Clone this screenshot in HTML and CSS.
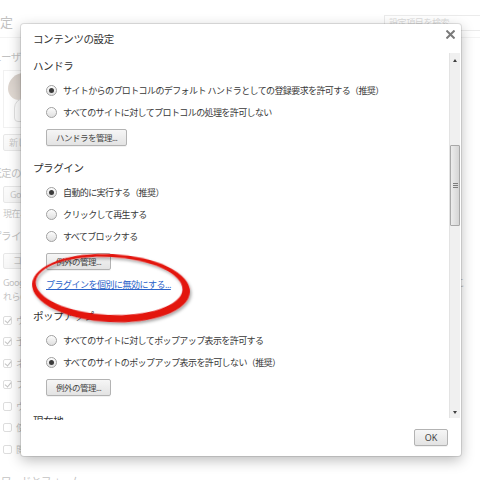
FILE: index.html
```html
<!DOCTYPE html>
<html lang="ja">
<head>
<meta charset="utf-8">
<title>コンテンツの設定</title>
<link rel="stylesheet" href="styles.css">
</head>
<body>
<div class="page">
  <header class="page-head">
    <h1 class="page-title">設定</h1>
    <div class="search">設定項目を検索</div>
  </header>
  <main class="page-main">
    <h2 class="sec-title">ユーザー</h2>
    <div class="sec-body">
      <div class="profiles">
        <div class="profile-pic"><span class="pic-head"></span><span class="pic-body"></span></div>
      </div>
      <div class="bg-btn btn-new">新しいユーザーを追加</div>
    </div>
    <h2 class="sec-title sec-gap">既定のブラウザ</h2>
    <div class="sec-body">
      <div class="bg-btn btn-goo">Google Chrome を既定のブラウザにする</div>
      <p class="bg-text note">現在、Google Chrome は既定のブラウザに設定されていません。</p>
    </div>
    <h2 class="sec-title sec-gap2">プライバシー</h2>
    <div class="sec-body">
      <div class="bg-btn btn-content">コンテンツの設定...</div>
      <p class="bg-text para">Google Chrome では、ブラウジング エクスペリエンスを向上させるためにウェブサービスを使用する場合があります。こ<br>れらのサービスは必要に応じて無効にできます。</p>
      <div class="checks">
        <div class="check"><span class="cb on"></span>ウェブサービスを使用してナビゲーション エラーの解決を補助する</div>
        <div class="check"><span class="cb on"></span>予測サービスを使用してアドレスバーに入力された検索と URL を補完する</div>
        <div class="check"><span class="cb on"></span>ネットワーク動作を予測してページの読み込み速度を向上させる</div>
        <div class="check"><span class="cb on"></span>フィッシングや不正なソフトウェアからの保護を有効にする</div>
        <div class="check"><span class="cb"></span>ウェブサービスを使用してスペルミスを解決する</div>
        <div class="check"><span class="cb"></span>使用統計データと障害レポートを自動的に Google に送信する</div>
        <div class="check"><span class="cb"></span>閲覧トラフィックと一緒に「トラッキング拒否」リクエストを送信する</div>
      </div>
    </div>
    <h2 class="sec-title sec-gap3">パスワードとフォーム</h2>
  </main>
</div>

<div class="veil"></div>

<div class="dialog" role="dialog">
  <div class="dlg-head">
    <h1 class="dlg-title">コンテンツの設定</h1>
    <span class="dlg-close"><svg viewBox="0 0 9 9" width="9" height="9"><path d="M1.2 1.2 L7.8 7.8 M7.8 1.2 L1.2 7.8" stroke="#7a7a7a" stroke-width="2" stroke-linecap="square"/></svg></span>
  </div>
  <div class="dlg-body">
    <div class="dlg-content">
      <section class="grp">
        <h3 class="grp-title">ハンドラ</h3>
        <div class="radios">
          <div class="radio"><span class="rb on"></span><span>サイトからのプロトコルのデフォルト ハンドラとしての登録要求を許可する（推奨）</span></div>
          <div class="radio"><span class="rb"></span><span>すべてのサイトに対してプロトコルの処理を許可しない</span></div>
        </div>
        <button class="btn">ハンドラを管理...</button>
      </section>
      <section class="grp">
        <h3 class="grp-title">プラグイン</h3>
        <div class="radios">
          <div class="radio"><span class="rb on"></span><span>自動的に実行する（推奨）</span></div>
          <div class="radio"><span class="rb"></span><span>クリックして再生する</span></div>
          <div class="radio"><span class="rb"></span><span>すべてブロックする</span></div>
        </div>
        <button class="btn">例外の管理...</button>
        <a class="link" href="#">プラグインを個別に無効にする...</a>
      </section>
      <section class="grp">
        <h3 class="grp-title">ポップアップ</h3>
        <div class="radios">
          <div class="radio"><span class="rb"></span><span>すべてのサイトに対してポップアップ表示を許可する</span></div>
          <div class="radio"><span class="rb on"></span><span>すべてのサイトのポップアップ表示を許可しない（推奨）</span></div>
        </div>
        <button class="btn">例外の管理...</button>
      </section>
      <section class="grp grp-last">
        <h3 class="grp-title">現在地</h3>
        <div class="radios">
          <div class="radio"><span class="rb"></span><span>すべてのサイトに対して現在地の追跡を許可する</span></div>
        </div>
      </section>
    </div>
    <div class="vscroll">
      <span class="arrow up"></span>
      <span class="track"><span class="thumb"><span class="grip"></span></span></span>
      <span class="arrow down"></span>
    </div>
  </div>
  <div class="dlg-foot"><button class="btn ok">OK</button></div>
</div>

<svg class="annot" width="480" height="480" viewBox="0 0 480 480" aria-hidden="true">
  <defs>
    <filter id="sh" x="-10%" y="-20%" width="120%" height="140%">
      <feDropShadow dx="1.5" dy="2" stdDeviation="1.5" flood-color="#000" flood-opacity="0.35"/>
    </filter>
  </defs>
  <g transform="rotate(3 111 288)" filter="url(#sh)">
    <path fill="#e3120f" fill-rule="evenodd" d="M32 288 A79 34 0 1 0 190 288 A79 34 0 1 0 32 288 Z M35.5 286 A73.5 29 0 1 0 182.5 286 A73.5 29 0 1 0 35.5 286 Z"/>
  </g>
</svg>
</body>
</html>
```

FILE: styles.css
```css
* { box-sizing: border-box; }

html, body {
  margin: 0;
  padding: 0;
}

body {
  position: relative;
  width: 480px;
  height: 480px;
  overflow: hidden;
  background: #ffffff;
  color: #303030;
  font-family: "Noto Sans", "Noto Sans CJK JP", sans-serif;
}

/* ---------- background settings page ---------- */
.page {
  margin-left: -13px;
  width: 520px;
}

.page-head {
  display: flex;
  align-items: flex-start;
  height: 38px;
  border-bottom: 1px solid #d6d6d6;
}

.page-title {
  margin: 14px 0 0;
  font-size: 13px;
  line-height: 16px;
  font-weight: normal;
}

.search {
  margin: 15px 3px 0 auto;
  width: 120px;
  height: 16px;
  padding-left: 4px;
  border: 1px solid #bdbdbd;
  font-size: 9px;
  line-height: 14px;
  letter-spacing: -0.4px;
  color: #8a8a8a;
  white-space: nowrap;
}

.page-main {
  padding-left: 4px;
}

.sec-title {
  margin: 12px 0 0;
  font-size: 10.5px;
  line-height: 14px;
  letter-spacing: -0.5px;
  font-weight: normal;
  white-space: nowrap;
}

.sec-gap { margin-top: 15px; }
.sec-gap2 { margin-top: 8px; }
.sec-gap3 { margin-top: 14px; text-indent: -10px; }

.sec-body {
  padding-left: 12px;
}

.profiles {
  margin-top: 6px;
  width: 330px;
  height: 58px;
  padding: 2px 0 0 4px;
  border: 1px solid #d0d0d0;
}

.profile-pic {
  display: flex;
  flex-direction: column;
  align-items: center;
  width: 34px;
  height: 52px;
}

.pic-head {
  display: block;
  width: 34px;
  height: 27px;
  border-radius: 17px 17px 12px 12px;
  background: linear-gradient(#7c6450, #a08670);
}

.pic-body {
  display: block;
  width: 22px;
  height: 24px;
  margin-top: -2px;
  border: 1px solid #9a9a9a;
  border-radius: 10px 10px 4px 4px;
  background: #fff;
}

.bg-btn {
  height: 17px;
  border: 1px solid #b0b0b0;
  border-radius: 2px;
  background: linear-gradient(#f3f3f3, #e0e0e0);
  font-size: 9px;
  line-height: 15px;
  letter-spacing: -0.5px;
  color: #444;
  white-space: nowrap;
}

.btn-new {
  margin-top: 6px;
  width: 130px;
  padding-left: 5px;
}

.btn-goo {
  margin-top: 6px;
  width: 190px;
  padding-left: 6px;
}

.btn-content {
  margin-top: 10px;
  width: 110px;
  height: 16px;
  padding-left: 9px;
  line-height: 14px;
}

.bg-text {
  margin: 0;
  font-size: 9px;
  line-height: 14px;
  letter-spacing: -0.5px;
  white-space: nowrap;
}

.note { margin-top: 4px; }
.para { margin-top: 7px; }

.checks {
  margin-top: 5.5px;
}

.check {
  display: flex;
  align-items: center;
  height: 21.5px;
  font-size: 9px;
  letter-spacing: -0.5px;
  white-space: nowrap;
}

.cb {
  position: relative;
  flex: none;
  width: 9px;
  height: 9px;
  margin-right: 4px;
  border: 1px solid #8c8c8c;
  border-radius: 2px;
  background: #fff;
}

.cb.on::after {
  content: "";
  position: absolute;
  left: 2px;
  top: 0;
  width: 3px;
  height: 5px;
  border-right: 1.5px solid #333;
  border-bottom: 1.5px solid #333;
  transform: rotate(40deg);
}

.veil {
  position: absolute;
  inset: 0;
  background: rgba(255, 255, 255, 0.7);
}

/* ---------- dialog ---------- */
.dialog {
  position: absolute;
  left: 21px;
  top: 24px;
  width: 440px;
  height: 432px;
  display: flex;
  flex-direction: column;
  background: #ffffff;
  border-radius: 3px;
  box-shadow: 0 0 0 1px rgba(0, 0, 0, 0.1), 0 4px 14px rgba(0, 0, 0, 0.28);
}

.dlg-head {
  flex: none;
  display: flex;
  align-items: center;
  height: 29px;
  padding-left: 12px;
}

.dlg-title {
  margin: 0;
  font-size: 10.5px;
  line-height: 16px;
  letter-spacing: -0.4px;
  font-weight: normal;
  color: #333;
}

.dlg-close {
  display: block;
  align-self: flex-start;
  width: 9px;
  height: 9px;
  margin: 6px 6px 0 auto;
}

.dlg-close svg { display: block; }

.dlg-body {
  flex: none;
  display: flex;
  height: 367px;
}

.dlg-content {
  flex: 1;
  overflow: hidden;
  padding: 3px 0 0 12px;
}

.grp + .grp { margin-top: 12px; }
.grp + .grp-last { margin-top: 15px; }

.grp-title {
  margin: 0;
  font-size: 10.5px;
  line-height: 20px;
  letter-spacing: -0.4px;
  font-weight: normal;
  color: #303030;
}

.radios { margin-top: 3px; }

.radio {
  display: flex;
  align-items: center;
  height: 22px;
  padding-left: 13px;
  font-size: 9px;
  letter-spacing: -0.6px;
  color: #383838;
  white-space: nowrap;
}

.rb {
  flex: none;
  display: flex;
  align-items: center;
  justify-content: center;
  width: 11px;
  height: 11px;
  margin-right: 6px;
  border: 1px solid #a0a0a0;
  border-radius: 50%;
  background: linear-gradient(#fbfbfb, #e0e0e0);
  box-shadow: inset 0 1px 1px rgba(255, 255, 255, 0.8);
}

.rb.on::after {
  content: "";
  width: 5px;
  height: 5px;
  border-radius: 50%;
  background: #3b3b3b;
}

.btn {
  display: block;
  height: 17px;
  margin: 6px 0 0 13px;
  padding: 0 9px;
  border: 1px solid #b3b3b3;
  border-radius: 2px;
  background: linear-gradient(#f6f6f6, #e3e3e3);
  box-shadow: 0 1px 0 rgba(0, 0, 0, 0.05);
  font-family: "Noto Sans", "Noto Sans CJK JP", sans-serif;
  font-size: 8.5px;
  line-height: 15px;
  letter-spacing: -0.5px;
  color: #444;
  white-space: nowrap;
}

.link {
  display: block;
  width: fit-content;
  margin: 6px 0 0 13px;
  font-size: 9px;
  line-height: 18px;
  letter-spacing: -0.5px;
  color: #2a62c9;
  text-decoration: underline;
}

.vscroll {
  flex: none;
  display: flex;
  flex-direction: column;
  width: 11px;
  margin: 0 1px 2px 0;
  background: #f0f0f0;
  border-left: 1px solid #e3e3e3;
}

.arrow {
  flex: none;
  display: flex;
  align-items: center;
  justify-content: center;
  height: 14px;
}

.arrow.down { height: 12px; }

.arrow::before {
  content: "";
  width: 0;
  height: 0;
  border-left: 2.5px solid transparent;
  border-right: 2.5px solid transparent;
}

.arrow.up::before { border-bottom: 3px solid #404040; }
.arrow.down::before { border-top: 3px solid #404040; }

.track {
  flex: 1;
  display: block;
}

.thumb {
  display: flex;
  align-items: center;
  justify-content: center;
  height: 81px;
  margin-top: 78px;
  border: 1px solid #a8a8a8;
  border-radius: 1px;
  background: linear-gradient(to right, #ececec, #d5d5d5);
}

.grip {
  display: block;
  width: 5px;
  height: 6px;
  background: repeating-linear-gradient(#7d7d7d 0 1px, transparent 1px 2px);
}

.dlg-foot {
  flex: 1;
  display: flex;
  justify-content: flex-end;
  align-items: flex-start;
  padding: 9px 13px 0 0;
}

.btn.ok {
  width: 34px;
  margin: 0;
  padding: 0;
  text-align: center;
  letter-spacing: 0;
  font-size: 9px;
}

/* ---------- annotation ---------- */
.annot {
  position: absolute;
  left: 0;
  top: 0;
  pointer-events: none;
}
```
